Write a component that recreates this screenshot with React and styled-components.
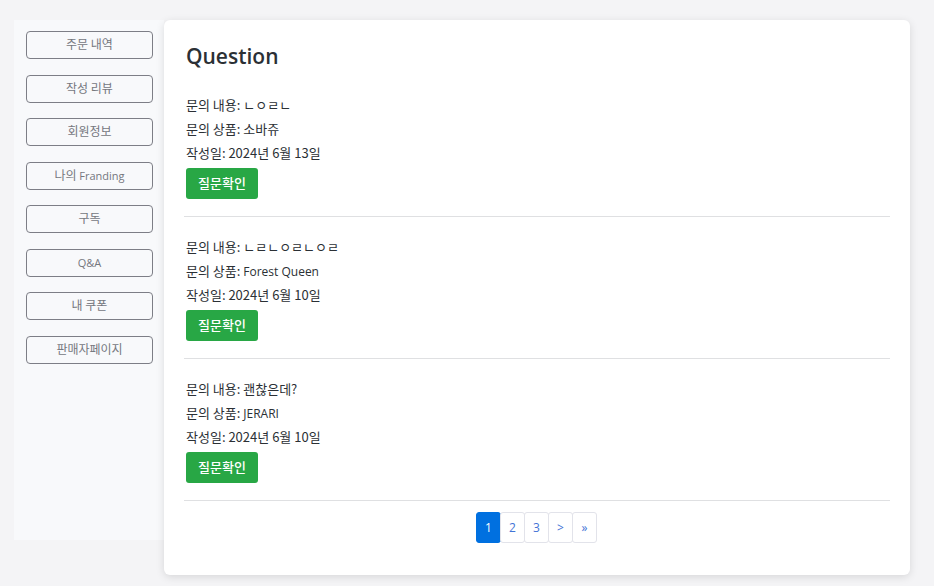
import React from "react";
import styled, { createGlobalStyle } from "styled-components";

const GlobalStyle = createGlobalStyle`
  * { box-sizing: border-box; }
  body {
    margin: 0;
    background: #f4f4f6;
    color: #2b3035;
    font: 13px/24px "Noto Sans CJK KR", sans-serif;
  }
`;

const Page = styled.div`
  display: flex;
  align-items: flex-start;
  padding: 20px 24px 11px 14px;
`;

const Sidebar = styled.nav`
  flex: 0 0 150px;
  min-height: 520px;
  padding: 11px 11px 11px 12px;
  background: #f8f9fb;
`;

const Menu = styled.div`
  display: flex;
  flex-direction: column;
  justify-content: space-between;
  min-height: 333px;
`;

const MenuButton = styled.button`
  height: 28px;
  padding: 0 0 2px;
  border: 1px solid #7d7e86;
  border-radius: 4px;
  background: transparent;
  color: #75777e;
  font: inherit;
  font-size: 12px;
  line-height: 20px;
  cursor: pointer;
`;

const Card = styled.main`
  flex: 1;
  min-width: 0;
  padding: 22px 20px 32px;
  border-radius: 6px;
  background: #fff;
  box-shadow: 0 2px 8px rgba(0, 0, 0, 0.12);
`;

const Title = styled.h1`
  margin: 0 2px 23px;
  font-family: "Open Sans", sans-serif;
  font-size: 21px;
  line-height: 28px;
  font-weight: 600;
`;

const Question = styled.article`
  margin-bottom: 18px;
  padding: 0 2px 17px;
  border-bottom: 1px solid #dfe0e2;

  &:last-of-type {
    margin-bottom: 11px;
  }
`;

const Line = styled.p`
  margin: 0;
`;

const Latin = styled.span`
  font-family: "Open Sans", sans-serif;
  font-size: ${(p) => (p.$small ? "11px" : "12px")};
  line-height: 1;
`;

const ConfirmButton = styled.button`
  display: block;
  height: 31px;
  margin-top: 3px;
  padding: 0 12px 2px;
  border: 0;
  border-radius: 3px;
  background: #28a745;
  color: #fff;
  font: inherit;
  font-weight: 500;
  cursor: pointer;
`;

const Pagination = styled.nav`
  display: flex;
  justify-content: center;
`;

const PageLink = styled.a`
  width: 25px;
  height: 31px;
  margin-left: -1px;
  border: 1px solid ${(p) => (p.$active ? "#0070e0" : "#e2e3ea")};
  border-radius: 3px;
  background: ${(p) => (p.$active ? "#0070e0" : "#fff")};
  color: ${(p) => (p.$active ? "#fff" : "#4273d6")};
  font: 12px/29px "Open Sans", sans-serif;
  text-align: center;
  text-decoration: none;
`;

const menu = [
  { text: "주문 내역" },
  { text: "작성 리뷰" },
  { text: "회원정보" },
  { text: "나의 ", latin: "Franding" },
  { text: "구독" },
  { text: "", latin: "Q&A" },
  { text: "내 쿠폰" },
  { text: "판매자페이지" },
];

const questions = [
  { text: "ㄴㅇㄹㄴ", product: "소바쥬", date: "2024년 6월 13일" },
  { text: "ㄴㄹㄴㅇㄹㄴㅇㄹ", product: <Latin>Forest Queen</Latin>, date: "2024년 6월 10일" },
  { text: "괜찮은데?", product: <Latin>JERARI</Latin>, date: "2024년 6월 10일" },
];

const pages = ["1", "2", "3", ">", "»"];

export default function App() {
  return (
    <>
      <GlobalStyle />
      <Page>
        <Sidebar>
          <Menu>
            {menu.map(({ text, latin }) => (
              <MenuButton key={text + latin} type="button">
                {text}
                {latin && <Latin $small>{latin}</Latin>}
              </MenuButton>
            ))}
          </Menu>
        </Sidebar>
        <Card>
          <Title>Question</Title>
          {questions.map((q) => (
            <Question key={q.text}>
              <Line>문의 내용: {q.text}</Line>
              <Line>문의 상품: {q.product}</Line>
              <Line>작성일: {q.date}</Line>
              <ConfirmButton type="button">질문확인</ConfirmButton>
            </Question>
          ))}
          <Pagination>
            {pages.map((p) => (
              <PageLink key={p} href="#" $active={p === "1"}>{p}</PageLink>
            ))}
          </Pagination>
        </Card>
      </Page>
    </>
  );
}
